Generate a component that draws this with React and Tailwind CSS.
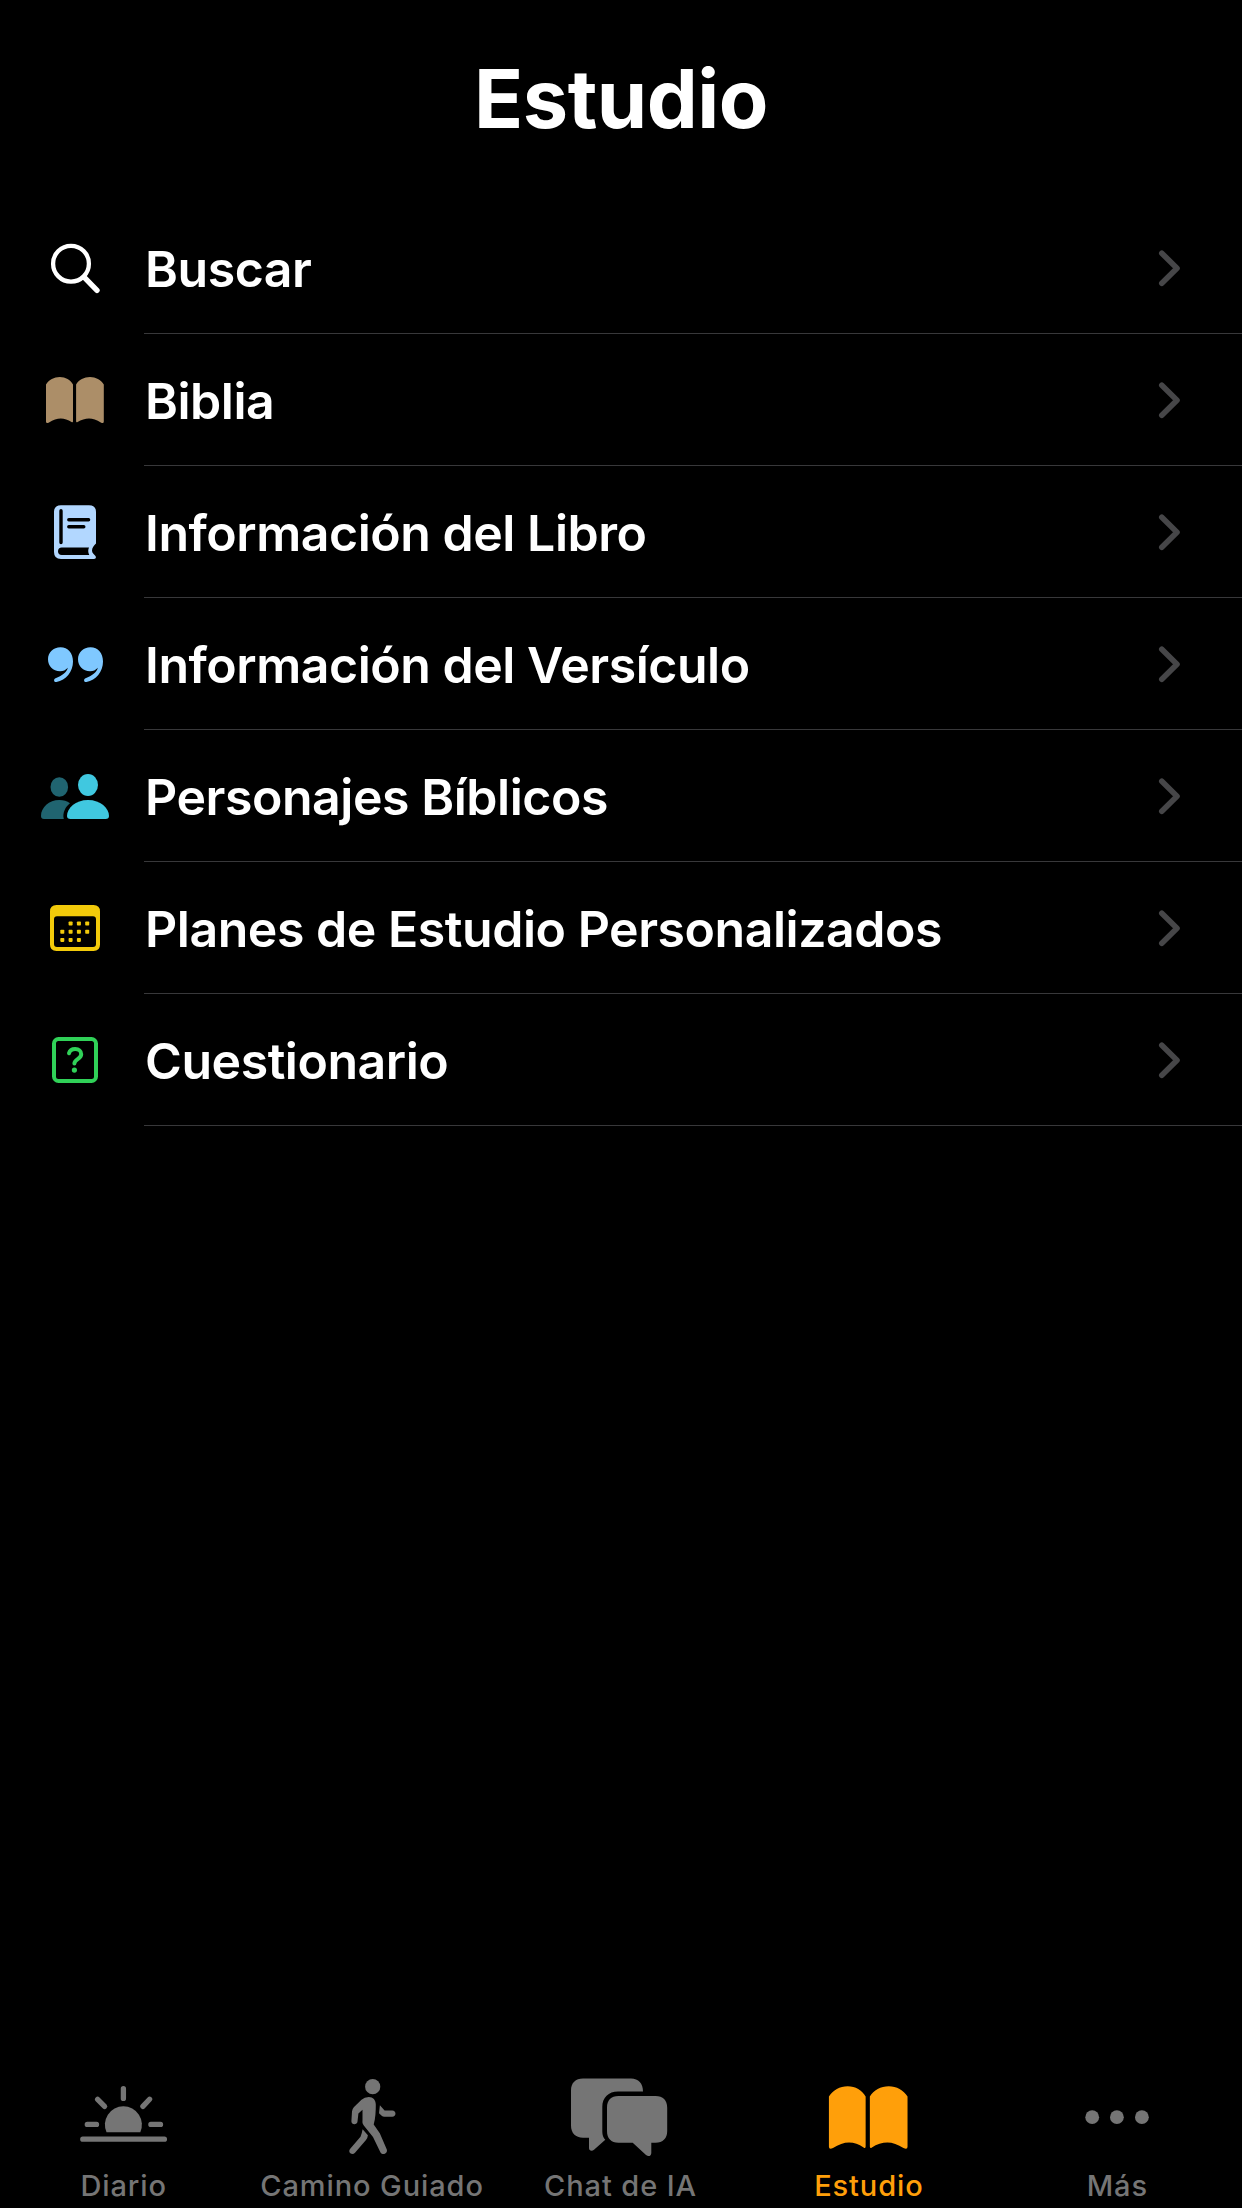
import React from "react";

// Forma de libro abierto, compartida por la lista y la barra inferior
function BookPages() {
    return (
        <>
            <path d="M7 20.5C10 15.8 15 13 20.8 13S31.3 15.8 34 20.5V57.3Q34 59 32.5 58C29 55.6 25.5 54.4 21.8 54.4S14 55.8 10 58.5Q7 60 7 57.5Z" />
            <path d="M64.8 20.5C61.8 15.8 56.8 13 51 13S39.8 15.8 37.1 20.5V57.3Q37.1 59 38.6 58C42.1 55.6 46.3 54.4 50 54.4S57.8 55.8 61.8 58.5Q64.8 60 64.8 57.5Z" />
        </>
    );
}

function QuoteMark() {
    return (
        <path d="M21.5 19.3C29 19.3 34 25 34 33.5C34 44 27 52 17.5 54C15 54.4 14.1 51.3 16.5 50.2C23 47.8 27.7 44.5 28.8 39.8C26.5 42.3 24.5 43.2 21 43.2C14 43.2 9 38 9 31.3C9 24.5 14.3 19.3 21.5 19.3Z" />
    );
}

const items = [
    {
        label: "Buscar",
        icon: (
            <g fill="none" stroke="#ffffff" strokeLinecap="round">
                <circle cx="32" cy="31.7" r="17.9" strokeWidth="4.3" />
                <path d="M45.3 45.3L58 58.3" strokeWidth="5.4" />
            </g>
        ),
    },
    {
        label: "Biblia",
        icon: (
            <g fill="#ac8e68">
                <BookPages />
            </g>
        ),
    },
    {
        label: "Información del Libro",
        icon: (
            <>
                <path
                    fill="#b2d7ff"
                    fillRule="evenodd"
                    d="M22 9.2H50Q57 9.2 57 16V47.5C55 49.5 53 51.5 53 54.5C53 57 55 58.3 56.5 60Q57.8 63 55 63H22Q15 63 15 56V16Q15 9.2 22 9.2ZM22.8 51.5Q19 51.5 19 55.3Q19 59 22.8 59H50.3C48.9 56.5 48.9 54 50 51.5Z"
                />
                <path d="M22 14.8V46.6M29.8 23.7H49.6M29.8 30.8H44.8" stroke="#000000" strokeWidth="3.4" strokeLinecap="round" />
            </>
        ),
    },
    {
        label: "Información del Versículo",
        icon: (
            <g fill="#7fc8ff">
                <QuoteMark />
                <g transform="translate(30 0)">
                    <QuoteMark />
                </g>
            </g>
        ),
    },
    {
        label: "Personajes Bíblicos",
        icon: (
            <>
                <g fill="#206470">
                    <ellipse cx="20.3" cy="27" rx="8.8" ry="9.8" />
                    <path d="M5 59Q2 59 2 56C2 47.5 10 40 20.3 40C24.5 40 28 41.2 31 43.2C26.5 46.5 23.2 53 24.8 59Z" />
                </g>
                <g fill="#40c8e0">
                    <ellipse cx="49" cy="25" rx="10" ry="11" />
                    <path d="M31.5 59Q28 59 28 56C28 48 36.5 40 49 40S70 48 70 56Q70 59 66.5 59Z" />
                </g>
            </>
        ),
    },
    {
        label: "Planes de Estudio Personalizados",
        icon: (
            <g fill="#f2ca0a">
                <path
                    fillRule="evenodd"
                    d="M17.5 13H54.5Q61 13 61 19.5V52.5Q61 59 54.5 59H17.5Q11 59 11 52.5V19.5Q11 13 17.5 13ZM18 24.3Q15 24.3 15 27.3V52Q15 55 18 55H54Q57 55 57 52V27.3Q57 24.3 54 24.3Z"
                />
                {[[1, 0], [2, 0], [3, 0], [0, 1], [1, 1], [2, 1], [3, 1], [0, 2], [1, 2], [2, 2]].map(([col, row]) => (
                    <rect key={`${col}-${row}`} x={21.3 + col * 8.3} y={29.5 + row * 8.2} width="4" height="4" rx="0.8" />
                ))}
            </g>
        ),
    },
    {
        label: "Cuestionario",
        icon: (
            <g fill="none" stroke="#30d158" strokeWidth="4" strokeLinecap="round">
                <rect x="15" y="15" width="42" height="42" rx="4.5" />
                <path d="M30 29.2C30.7 26.5 32.8 25.1 36.2 25.1C39.8 25.1 42.2 27.2 42.2 30.2C42.2 35.2 35.4 35 35.4 39.6" />
                <circle cx="35.4" cy="46.1" r="2.6" fill="#30d158" stroke="none" />
            </g>
        ),
    },
];

const tabs = [
    {
        label: "Diario",
        icon: (
            <>
                <path d="M42.5 62.3A18.5 18.5 0 1 1 76.3 62.3Z" fill="currentColor" />
                <path
                    d="M59.4 18.6V28.4M33.6 29.3L40.6 36.4M85.6 29.3L78.9 36.4M23.3 54.4H32.5M86.9 54.4H96.5M18.8 69.2H100.4"
                    fill="none"
                    stroke="currentColor"
                    strokeWidth="5.3"
                    strokeLinecap="round"
                />
            </>
        ),
    },
    {
        label: "Camino Guiado",
        icon: (
            <g fill="currentColor">
                <circle cx="59.7" cy="16.7" r="7.6" />
                <path d="M55.8 27C60 27 62.8 30 62.8 34.5C62.8 41 62.5 48.5 60.7 54.5L66.8 63.3L73.8 79.5C75 83 70 86 67.5 82.5L60 67L50.8 55.5C49.2 53.5 49.4 52 49.5 50V39.7L45.4 43.4L44.5 51.5C44.2 55.3 38.3 55.1 38.4 51.3L39 41.5Q39.2 39 41 37L48.5 29.8Q51.5 27 55.8 27Z" />
                <path d="M49.6 59.2L54.9 65.2Q54.6 68 53 70L42 82.8C39 85.8 34.6 82.5 37 79L47.5 66.8Q49 63 49.6 59.2Z" />
                <path d="M66.9 35.3L71.6 40.5H79.2C83.6 40.5 83.6 46.8 79.2 46.8H71.3Q69.8 46.8 68.7 45.8L66 43.2Z" />
            </g>
        ),
    },
    {
        label: "Chat de IA",
        icon: (
            <g fill="currentColor">
                <path d="M22 8.6H70C77.5 8.6 82 13.5 82 21.5H57C47.5 21.5 41.3 27.5 41.3 37V61.5C41.3 65 42.3 67.8 44.3 69.8L33.3 79.5C30.8 81.7 28 80.8 28 78V67.7H22C14.5 67.7 10 63 10 55.5V20.5C10 13 14.5 8.6 22 8.6Z" />
                <path d="M57.5 26H94.5C102 26 106.2 30.3 106.2 37.7V61C106.2 68.4 102 72.7 94.5 72.7H90.3V83C90.3 86.3 87.3 87 85 85L71.7 72.7H57.5C50 72.7 46 68.4 46 61V37.7C46 30.3 50 26 57.5 26Z" />
            </g>
        ),
    },
    {
        label: "Estudio",
        active: true,
        icon: (
            <g fill="currentColor" transform="translate(10.4 -1.5) scale(1.36)">
                <BookPages />
            </g>
        ),
    },
    {
        label: "Más",
        icon: (
            <g fill="currentColor">
                <circle cx="34.2" cy="47.2" r="6.9" />
                <circle cx="58.9" cy="47.2" r="6.9" />
                <circle cx="83.9" cy="47.2" r="6.9" />
            </g>
        ),
    },
];

function StudyRow({ label, icon }) {
    return (
        <li className="flex h-[132px] items-stretch pl-[39px]">
            <svg className="mt-[30px] h-[72px] w-[72px] shrink-0" viewBox="0 0 72 72">
                {icon}
            </svg>
            <div className="ml-[33px] flex flex-1 items-center justify-between border-b border-[#38383a] pr-[59px] pl-px">
                <span className="pt-[2px] text-[50px] leading-[60px] font-semibold tracking-[-0.46px] text-white">{label}</span>
                <svg className="h-[42px] w-[28px] shrink-0" viewBox="0 0 28 42" fill="none">
                    <path d="M6.8 6.2L22 21.2L6.8 36.2" stroke="#464648" strokeWidth="5.6" strokeLinecap="round" strokeLinejoin="round" />
                </svg>
            </div>
        </li>
    );
}

function App() {
    return (
        <div className="flex h-[2208px] w-[1242px] flex-col overflow-hidden bg-black font-['Inter',sans-serif]">
            <header className="h-[202px] pt-[50px] text-center">
                <h1 className="text-[81px] leading-[98px] font-bold tracking-[-0.5px] text-white">Estudio</h1>
            </header>

            <ul className="flex-1">
                {items.map((item) => (
                    <StudyRow key={item.label} label={item.label} icon={item.icon} />
                ))}
            </ul>

            {/* Barra de pestañas */}
            <nav className="grid grid-cols-5 pb-1">
                {tabs.map((tab) => (
                    <button
                        key={tab.label}
                        className={`flex flex-col items-center gap-[14px] ${tab.active ? "text-[#ff9f0a]" : "text-[#757575]"}`}
                    >
                        <svg className="h-[84px] w-[120px] overflow-visible" viewBox="0 0 120 84">
                            {tab.icon}
                        </svg>
                        <span className="pr-px text-[29px] leading-9 font-medium tracking-[0.9px] whitespace-nowrap">{tab.label}</span>
                    </button>
                ))}
            </nav>
        </div>
    );
}

export default App;
